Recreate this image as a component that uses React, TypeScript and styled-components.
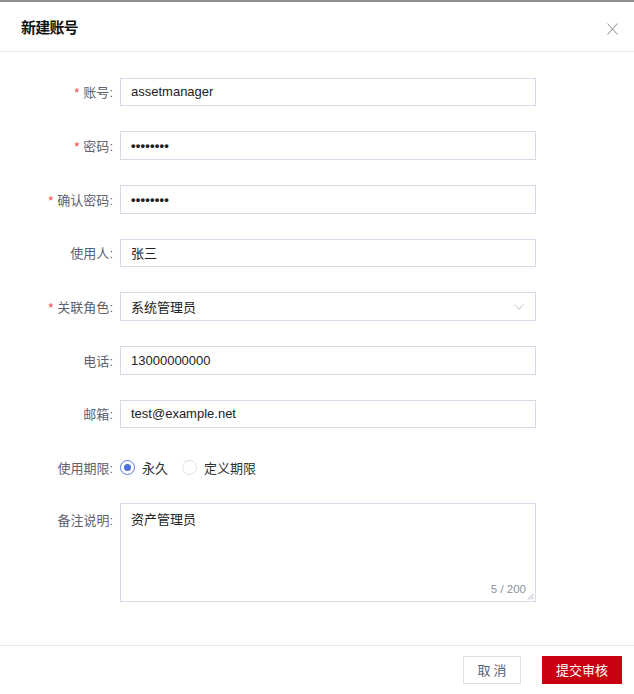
import React from "react";
import styled, { createGlobalStyle, css } from "styled-components";

const Global = createGlobalStyle`
  * { box-sizing: border-box; }
  html, body { margin: 0; padding: 0; background: #fff; }
  body {
    font-family: "Liberation Sans", "Noto Sans CJK SC", sans-serif;
    font-size: 13px;
    color: #303133;
  }
`;

const Dialog = styled.div`
  width: 634px;
  height: 694px;
  display: flex;
  flex-direction: column;
  background: #fff;
  overflow: hidden;
`;

const TopStrip = styled.div`
  height: 2px;
  background: #8f8f8f;
  flex: none;
`;

const Header = styled.div`
  height: 50px;
  flex: none;
  display: flex;
  align-items: center;
  justify-content: space-between;
  padding: 0 16px 0 21px;
  border-bottom: 1px solid #e6e6e6;
`;

const Title = styled.h1`
  margin: 0;
  font-family: "Noto Sans CJK SC", sans-serif;
  font-size: 15px;
  font-weight: 700;
  letter-spacing: -0.8px;
  color: #111;
`;

const CloseButton = styled.button`
  border: none;
  background: none;
  padding: 0;
  width: 12px;
  height: 12px;
  display: flex;
  align-items: center;
  justify-content: center;
  cursor: pointer;
  margin-top: 4px;
`;

const Body = styled.div`
  flex: 1;
  padding: 25.5px 98px 0 0;
`;

const Row = styled.div<{ $gap?: number; $top?: boolean; $h?: number }>`
  display: flex;
  align-items: ${(p) => (p.$top ? "flex-start" : "center")};
  min-height: ${(p) => p.$h ?? 28.7}px;
  margin-bottom: ${(p) => p.$gap ?? 25}px;
`;

const Label = styled.label<{ $top?: boolean }>`
  width: 120px;
  flex: none;
  padding-right: 7px;
  text-align: right;
  color: #5d6170;
  font-size: 13px;
  white-space: nowrap;
  ${(p) =>
    p.$top &&
    css`
      padding-top: 7px;
    `}
`;

const Star = styled.span`
  color: #f0464b;
  margin-right: 4px;
  font-size: 13px;
`;

const Field = styled.div`
  flex: 1;
  height: 28.7px;
  border: 1px solid #d6dae6;
  display: flex;
  align-items: center;
  padding: 0 10px;
  color: #222;
  font-size: 13px;
  position: relative;
`;

const Dots = styled.span`
  font-size: 13px;
  letter-spacing: 0.2px;
  font-weight: 700;
`;

const Chevron = styled.svg`
  position: absolute;
  right: 11px;
  top: 11px;
`;

const RadioGroup = styled.div`
  display: flex;
  align-items: center;
`;

const RadioItem = styled.label`
  display: flex;
  align-items: center;
  margin-right: 14px;
  color: #303133;
  font-size: 13px;
`;

const RadioCircle = styled.span<{ $checked?: boolean }>`
  width: 15px;
  height: 15px;
  border-radius: 50%;
  border: 1px solid ${(p) => (p.$checked ? "#5a7ae0" : "#dcdfe6")};
  margin-right: 7px;
  display: flex;
  align-items: center;
  justify-content: center;
  &::after {
    content: "";
    width: 7px;
    height: 7px;
    border-radius: 50%;
    background: ${(p) => (p.$checked ? "#4f6fdc" : "transparent")};
  }
`;

const TextArea = styled.div`
  flex: 1;
  height: 99px;
  border: 1px solid #d6dae6;
  padding: 7px 10px;
  position: relative;
  color: #222;
  font-size: 13px;
  line-height: 18px;
`;

const Counter = styled.span`
  position: absolute;
  right: 9px;
  bottom: 3px;
  font-size: 11.5px;
  color: #8d919a;
`;

const Resize = styled.svg`
  position: absolute;
  right: 1px;
  bottom: 1px;
`;

const Footer = styled.div`
  flex: none;
  border-top: 1px solid #e8e8e8;
  padding: 10px 12px 10px 0;
  display: flex;
  justify-content: flex-end;
  gap: 21px;
  margin-top: auto;
`;

const Button = styled.button<{ $primary?: boolean }>`
  height: 28.5px;
  padding: 0;
  font-family: "Liberation Sans", "Noto Sans CJK SC", sans-serif;
  font-size: 13px;
  cursor: pointer;
  ${(p) =>
    p.$primary
      ? css`
          width: 80px;
          background: #c8000f;
          border: 1px solid #c8000f;
          color: #fff;
        `
      : css`
          width: 58px;
          background: #fff;
          border: 1px solid #dcdfe6;
          color: #5d6170;
          letter-spacing: 3px;
          text-indent: 3px;
        `}
`;

type FieldDef = { label: string; required?: boolean; value: React.ReactNode; select?: boolean };

const fields: FieldDef[] = [
  { label: "账号", required: true, value: "assetmanager" },
  { label: "密码", required: true, value: <Dots>••••••••</Dots> },
  { label: "确认密码", required: true, value: <Dots>••••••••</Dots> },
  { label: "使用人", value: "张三" },
  { label: "关联角色", required: true, value: "系统管理员", select: true },
  { label: "电话", value: "13000000000" },
  { label: "邮箱", value: "test@example.net" },
];

export default function App() {
  return (
    <>
      <Global />
      <Dialog>
        <TopStrip />
        <Header>
          <Title>新建账号</Title>
          <CloseButton aria-label="close">
            <svg width="11" height="12" viewBox="0 0 11 12">
              <path d="M0.5 0.5 L10.5 11.5 M10.5 0.5 L0.5 11.5" stroke="#9a9ca3" strokeWidth="1.1" fill="none" />
            </svg>
          </CloseButton>
        </Header>
        <Body>
          {fields.map((f) => (
            <Row key={f.label}>
              <Label>
                {f.required && <Star>*</Star>}
                {f.label}:
              </Label>
              <Field>
                {f.value}
                {f.select && (
                  <Chevron width="10" height="6" viewBox="0 0 10 6">
                    <path d="M0.5 0.5 L5 5.3 L9.5 0.5" stroke="#c0c4cc" strokeWidth="1" fill="none" />
                  </Chevron>
                )}
              </Field>
            </Row>
          ))}
          <Row $gap={21}>
            <Label>使用期限:</Label>
            <RadioGroup>
              <RadioItem>
                <RadioCircle $checked />
                永久
              </RadioItem>
              <RadioItem>
                <RadioCircle />
                定义期限
              </RadioItem>
            </RadioGroup>
          </Row>
          <Row $top $gap={0}>
            <Label $top>备注说明:</Label>
            <TextArea>
              资产管理员
              <Counter>5 / 200</Counter>
              <Resize width="7" height="7" viewBox="0 0 7 7">
                <path d="M6.5 1 L1 6.5 M6.5 4 L4 6.5" stroke="#8d919a" strokeWidth="0.8" fill="none" />
              </Resize>
            </TextArea>
          </Row>
        </Body>
        <Footer>
          <Button>取消</Button>
          <Button $primary>提交审核</Button>
        </Footer>
      </Dialog>
    </>
  );
}
